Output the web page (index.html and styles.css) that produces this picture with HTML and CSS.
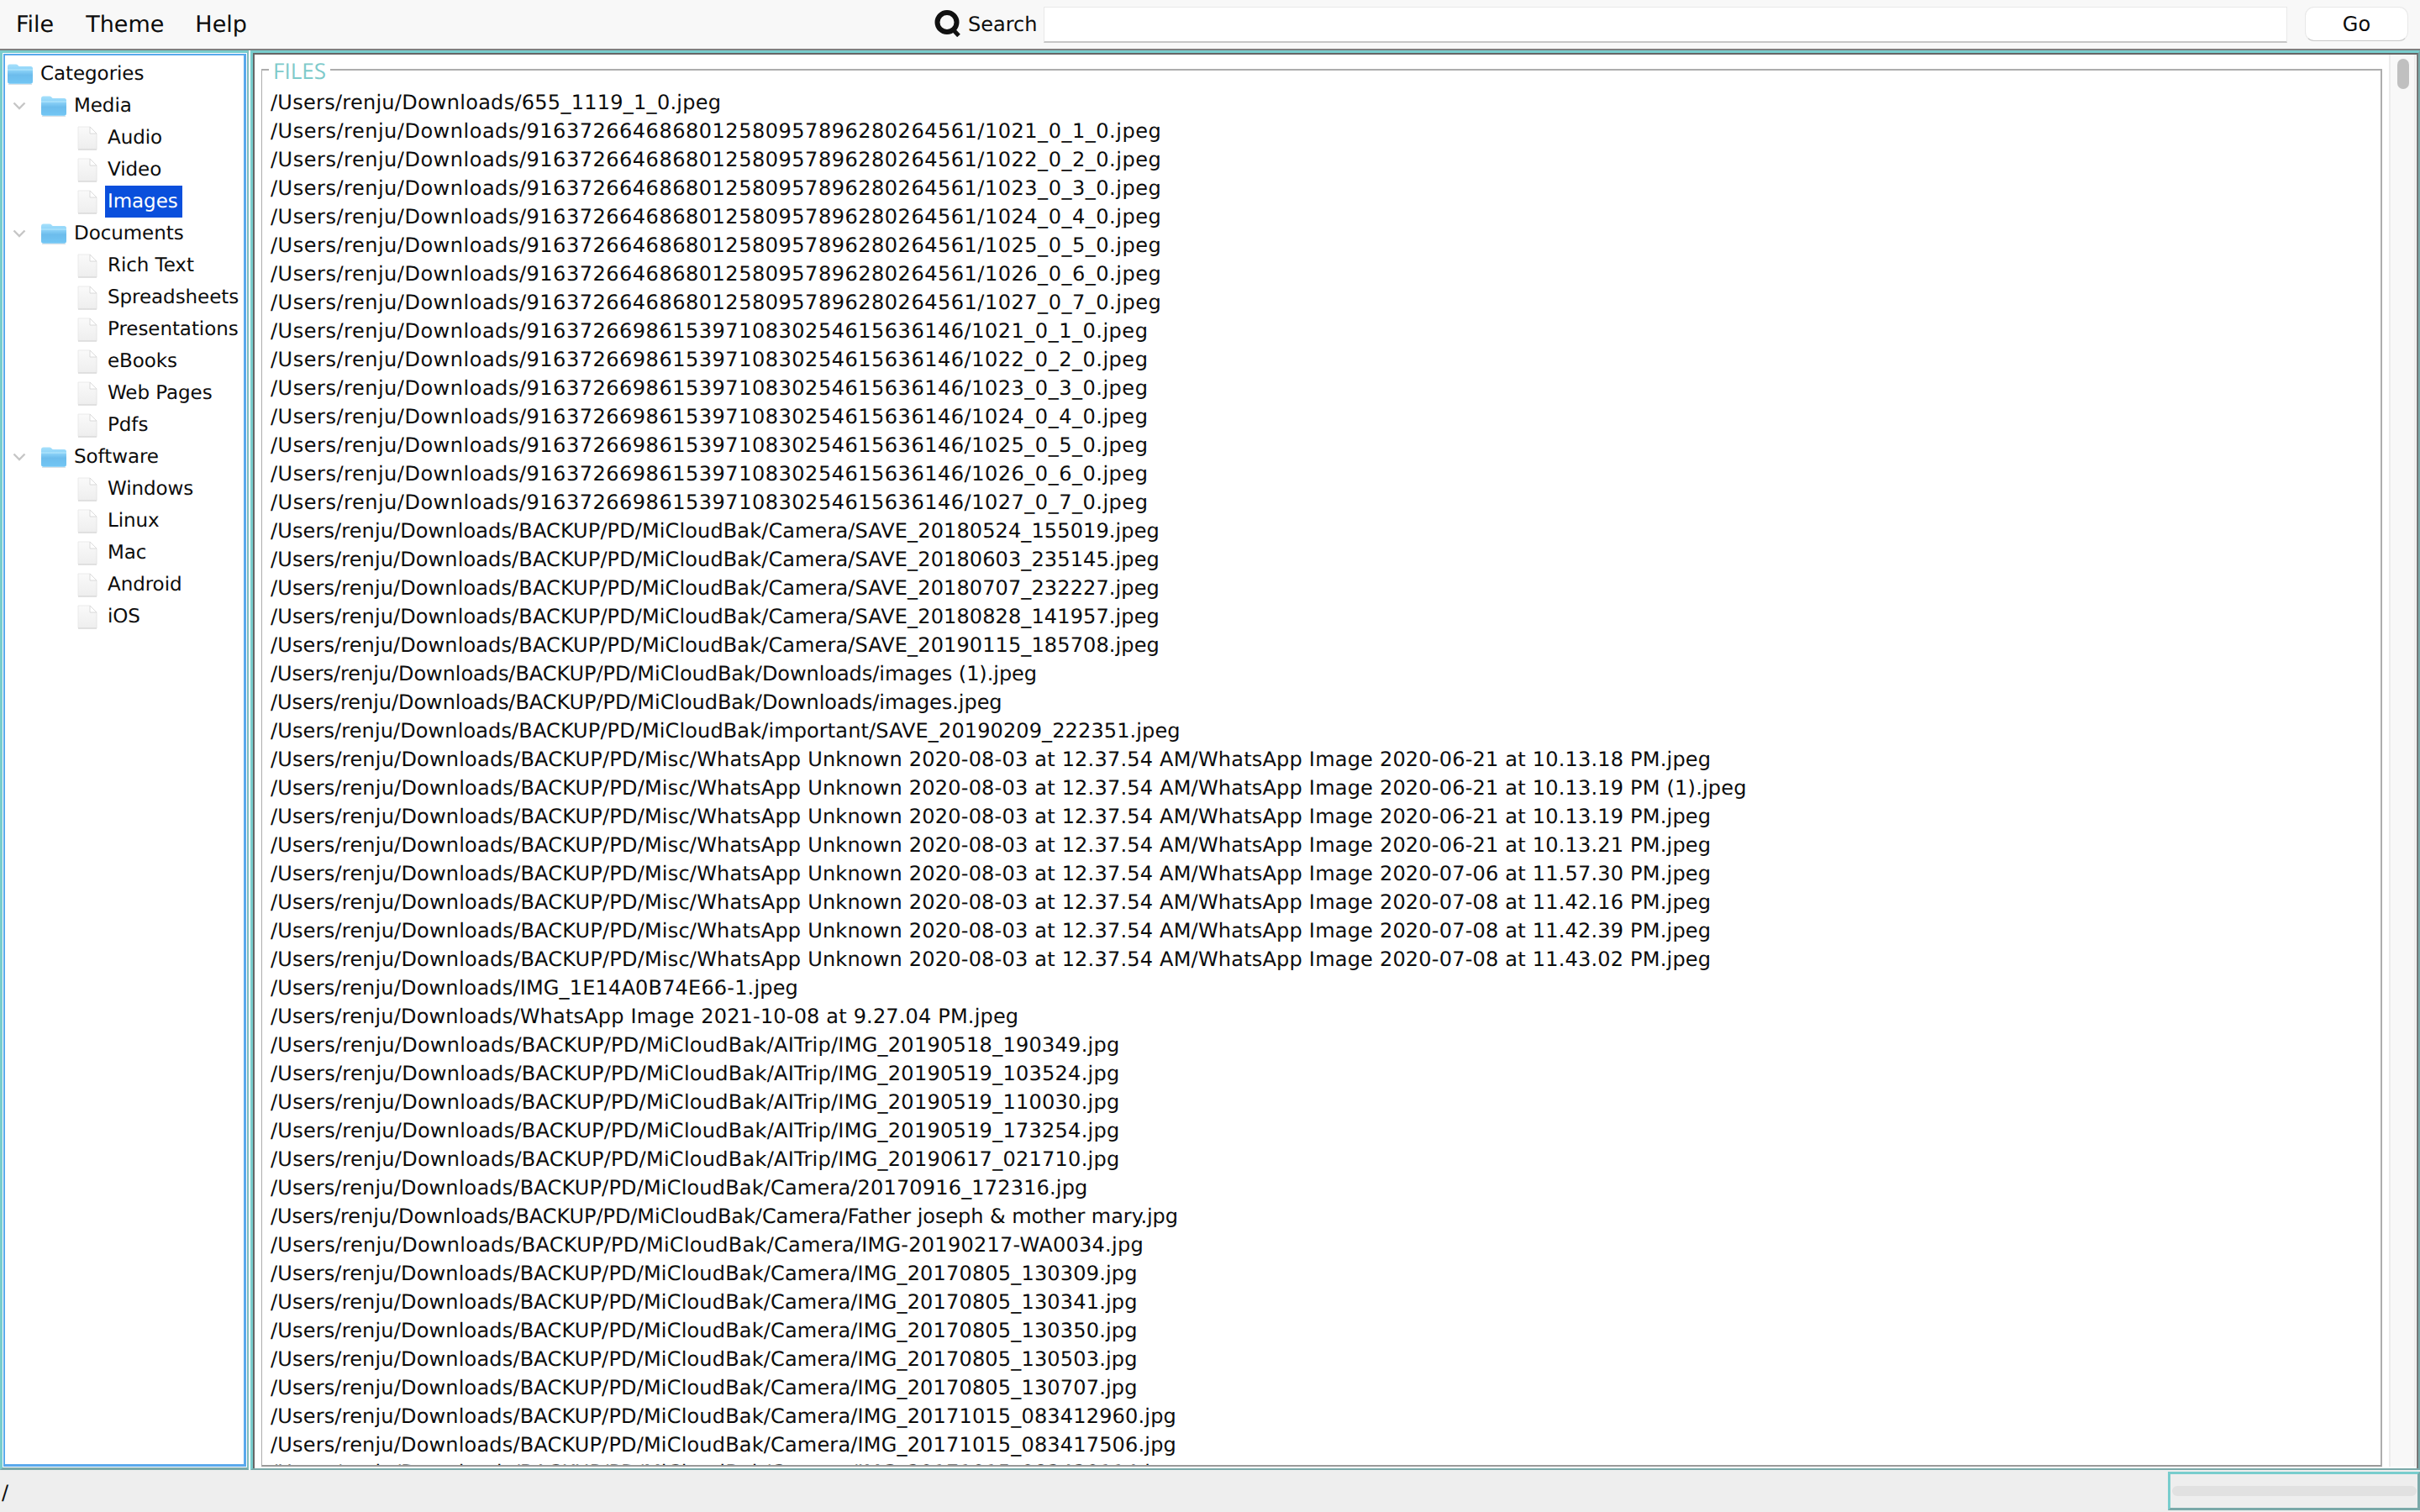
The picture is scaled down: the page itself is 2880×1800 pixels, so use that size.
FILE: index.html
```html
<!DOCTYPE html>
<html lang="en">
<head>
<meta charset="utf-8">
<title>File Categories</title>
<link rel="stylesheet" href="styles.css">
</head>
<body>
<svg class="defs" aria-hidden="true">
  <defs>
    <linearGradient id="fold" x1="0" y1="0" x2="0" y2="1">
      <stop offset="0" stop-color="#a6e0fb"/>
      <stop offset=".3" stop-color="#8dd3f8"/>
      <stop offset=".55" stop-color="#6cbcec"/>
      <stop offset="1" stop-color="#72c6f4"/>
    </linearGradient>
    <linearGradient id="page" x1="0" y1="0" x2="0" y2="1">
      <stop offset="0" stop-color="#fafafa"/>
      <stop offset="1" stop-color="#eeeeee"/>
    </linearGradient>
    <symbol id="i-folder" viewBox="0 0 32 26">
      <path d="M1 4.500C1 2.500 2 1.500 3.500 1.500h7.500c1.500 0 2 .8 2.800 1.700.5.600 1 .8 2 .8h12.700c1.500 0 2.500 1 2.500 2.500V22c0 1.800-1 2.800-2.500 2.800h-25C2 24.800 1 23.800 1 22z" fill="url(#fold)"/>
      <path d="M1 7.500h30v1H1z" fill="#b9e8fd"/>
      <path d="M2 25h28v.8H2z" fill="#d0d8de"/>
    </symbol>
    <symbol id="i-file" viewBox="0 0 24 29">
      <path d="M1 1h14l8 8v18.500H1z" fill="url(#page)"/>
      <path d="M15 1v8h8z" fill="#ffffff"/>
      <path d="M15 1l8 8h-8z" fill="none" stroke="#d2d2d2" stroke-width=".8"/>
      <path d="M1 1v26.500M1 1h14" fill="none" stroke="#e6e6e6" stroke-width=".8"/>
      <path d="M1 28h22" stroke="#cfcfcf" stroke-width="1.200"/>
      <path d="M23 9v19" stroke="#dfdfdf" stroke-width=".8"/>
    </symbol>
    <symbol id="i-chev" viewBox="0 0 16 10">
      <path d="M1.500 1.500L8 8l6.500-6.500" fill="none" stroke="#c6c6c6" stroke-width="2.400"/>
    </symbol>
  </defs>
</svg>

<header class="menubar">
  <nav class="menus">
    <span class="menu menu-file">File</span>
    <span class="menu menu-theme">Theme</span>
    <span class="menu">Help</span>
  </nav>
  <div class="search">
    <svg class="search-icon" viewBox="0 0 32 32" aria-hidden="true">
      <circle cx="15" cy="14.500" r="11.500" fill="none" stroke="#111" stroke-width="6"/>
      <path d="M21 22l8 8.500" fill="none" stroke="#111" stroke-width="5"/>
    </svg>
    <span class="search-label">Search</span>
    <div class="search-input"></div>
    <button class="go" type="button">Go</button>
  </div>
</header>

<main class="main">
  <aside class="tree-pane">
    <div class="tree">
      <div class="row root"><svg class="folder"><use href="#i-folder"/></svg><span class="label">Categories</span></div>
      <div class="row branch"><svg class="chev"><use href="#i-chev"/></svg><svg class="folder"><use href="#i-folder"/></svg><span class="label">Media</span></div>
      <div class="row leaf"><svg class="file"><use href="#i-file"/></svg><span class="label">Audio</span></div>
      <div class="row leaf"><svg class="file"><use href="#i-file"/></svg><span class="label">Video</span></div>
      <div class="row leaf"><svg class="file"><use href="#i-file"/></svg><span class="label selected">Images</span></div>
      <div class="row branch"><svg class="chev"><use href="#i-chev"/></svg><svg class="folder"><use href="#i-folder"/></svg><span class="label">Documents</span></div>
      <div class="row leaf"><svg class="file"><use href="#i-file"/></svg><span class="label">Rich Text</span></div>
      <div class="row leaf"><svg class="file"><use href="#i-file"/></svg><span class="label">Spreadsheets</span></div>
      <div class="row leaf"><svg class="file"><use href="#i-file"/></svg><span class="label">Presentations</span></div>
      <div class="row leaf"><svg class="file"><use href="#i-file"/></svg><span class="label">eBooks</span></div>
      <div class="row leaf"><svg class="file"><use href="#i-file"/></svg><span class="label">Web Pages</span></div>
      <div class="row leaf"><svg class="file"><use href="#i-file"/></svg><span class="label">Pdfs</span></div>
      <div class="row branch"><svg class="chev"><use href="#i-chev"/></svg><svg class="folder"><use href="#i-folder"/></svg><span class="label">Software</span></div>
      <div class="row leaf"><svg class="file"><use href="#i-file"/></svg><span class="label">Windows</span></div>
      <div class="row leaf"><svg class="file"><use href="#i-file"/></svg><span class="label">Linux</span></div>
      <div class="row leaf"><svg class="file"><use href="#i-file"/></svg><span class="label">Mac</span></div>
      <div class="row leaf"><svg class="file"><use href="#i-file"/></svg><span class="label">Android</span></div>
      <div class="row leaf"><svg class="file"><use href="#i-file"/></svg><span class="label">iOS</span></div>
    </div>
  </aside>

  <section class="files-pane">
    <div class="files-inner">
      <fieldset class="files">
        <legend class="files-title">FILES</legend>
        <div class="file-list">
          <div class="fit-b">/Users/renju/Downloads/655_1119_1_0.jpeg</div>
          <div class="fit-a">/Users/renju/Downloads/9163726646868012580957896280264561/1021_0_1_0.jpeg</div>
          <div class="fit-a">/Users/renju/Downloads/9163726646868012580957896280264561/1022_0_2_0.jpeg</div>
          <div class="fit-a">/Users/renju/Downloads/9163726646868012580957896280264561/1023_0_3_0.jpeg</div>
          <div class="fit-a">/Users/renju/Downloads/9163726646868012580957896280264561/1024_0_4_0.jpeg</div>
          <div class="fit-a">/Users/renju/Downloads/9163726646868012580957896280264561/1025_0_5_0.jpeg</div>
          <div class="fit-a">/Users/renju/Downloads/9163726646868012580957896280264561/1026_0_6_0.jpeg</div>
          <div class="fit-a">/Users/renju/Downloads/9163726646868012580957896280264561/1027_0_7_0.jpeg</div>
          <div class="fit-a">/Users/renju/Downloads/916372669861539710830254615636146/1021_0_1_0.jpeg</div>
          <div class="fit-a">/Users/renju/Downloads/916372669861539710830254615636146/1022_0_2_0.jpeg</div>
          <div class="fit-a">/Users/renju/Downloads/916372669861539710830254615636146/1023_0_3_0.jpeg</div>
          <div class="fit-a">/Users/renju/Downloads/916372669861539710830254615636146/1024_0_4_0.jpeg</div>
          <div class="fit-a">/Users/renju/Downloads/916372669861539710830254615636146/1025_0_5_0.jpeg</div>
          <div class="fit-a">/Users/renju/Downloads/916372669861539710830254615636146/1026_0_6_0.jpeg</div>
          <div class="fit-a">/Users/renju/Downloads/916372669861539710830254615636146/1027_0_7_0.jpeg</div>
          <div class="fit-d">/Users/renju/Downloads/BACKUP/PD/MiCloudBak/Camera/SAVE_20180524_155019.jpeg</div>
          <div class="fit-d">/Users/renju/Downloads/BACKUP/PD/MiCloudBak/Camera/SAVE_20180603_235145.jpeg</div>
          <div class="fit-d">/Users/renju/Downloads/BACKUP/PD/MiCloudBak/Camera/SAVE_20180707_232227.jpeg</div>
          <div class="fit-d">/Users/renju/Downloads/BACKUP/PD/MiCloudBak/Camera/SAVE_20180828_141957.jpeg</div>
          <div class="fit-d">/Users/renju/Downloads/BACKUP/PD/MiCloudBak/Camera/SAVE_20190115_185708.jpeg</div>
          <div class="fit-e">/Users/renju/Downloads/BACKUP/PD/MiCloudBak/Downloads/images (1).jpeg</div>
          <div class="fit-e">/Users/renju/Downloads/BACKUP/PD/MiCloudBak/Downloads/images.jpeg</div>
          <div class="fit-d">/Users/renju/Downloads/BACKUP/PD/MiCloudBak/important/SAVE_20190209_222351.jpeg</div>
          <div class="fit-w">/Users/renju/Downloads/BACKUP/PD/Misc/WhatsApp Unknown 2020-08-03 at 12.37.54 AM/WhatsApp Image 2020-06-21 at 10.13.18 PM.jpeg</div>
          <div class="fit-w">/Users/renju/Downloads/BACKUP/PD/Misc/WhatsApp Unknown 2020-08-03 at 12.37.54 AM/WhatsApp Image 2020-06-21 at 10.13.19 PM (1).jpeg</div>
          <div class="fit-w">/Users/renju/Downloads/BACKUP/PD/Misc/WhatsApp Unknown 2020-08-03 at 12.37.54 AM/WhatsApp Image 2020-06-21 at 10.13.19 PM.jpeg</div>
          <div class="fit-w">/Users/renju/Downloads/BACKUP/PD/Misc/WhatsApp Unknown 2020-08-03 at 12.37.54 AM/WhatsApp Image 2020-06-21 at 10.13.21 PM.jpeg</div>
          <div class="fit-w">/Users/renju/Downloads/BACKUP/PD/Misc/WhatsApp Unknown 2020-08-03 at 12.37.54 AM/WhatsApp Image 2020-07-06 at 11.57.30 PM.jpeg</div>
          <div class="fit-w">/Users/renju/Downloads/BACKUP/PD/Misc/WhatsApp Unknown 2020-08-03 at 12.37.54 AM/WhatsApp Image 2020-07-08 at 11.42.16 PM.jpeg</div>
          <div class="fit-w">/Users/renju/Downloads/BACKUP/PD/Misc/WhatsApp Unknown 2020-08-03 at 12.37.54 AM/WhatsApp Image 2020-07-08 at 11.42.39 PM.jpeg</div>
          <div class="fit-w">/Users/renju/Downloads/BACKUP/PD/Misc/WhatsApp Unknown 2020-08-03 at 12.37.54 AM/WhatsApp Image 2020-07-08 at 11.43.02 PM.jpeg</div>
          <div class="fit-c">/Users/renju/Downloads/IMG_1E14A0B74E66-1.jpeg</div>
          <div class="fit-c">/Users/renju/Downloads/WhatsApp Image 2021-10-08 at 9.27.04 PM.jpeg</div>
          <div class="fit-b">/Users/renju/Downloads/BACKUP/PD/MiCloudBak/AITrip/IMG_20190518_190349.jpg</div>
          <div class="fit-b">/Users/renju/Downloads/BACKUP/PD/MiCloudBak/AITrip/IMG_20190519_103524.jpg</div>
          <div class="fit-b">/Users/renju/Downloads/BACKUP/PD/MiCloudBak/AITrip/IMG_20190519_110030.jpg</div>
          <div class="fit-b">/Users/renju/Downloads/BACKUP/PD/MiCloudBak/AITrip/IMG_20190519_173254.jpg</div>
          <div class="fit-b">/Users/renju/Downloads/BACKUP/PD/MiCloudBak/AITrip/IMG_20190617_021710.jpg</div>
          <div class="fit-c">/Users/renju/Downloads/BACKUP/PD/MiCloudBak/Camera/20170916_172316.jpg</div>
          <div class="fit-e">/Users/renju/Downloads/BACKUP/PD/MiCloudBak/Camera/Father joseph &amp; mother mary.jpg</div>
          <div class="fit-b">/Users/renju/Downloads/BACKUP/PD/MiCloudBak/Camera/IMG-20190217-WA0034.jpg</div>
          <div class="fit-c">/Users/renju/Downloads/BACKUP/PD/MiCloudBak/Camera/IMG_20170805_130309.jpg</div>
          <div class="fit-c">/Users/renju/Downloads/BACKUP/PD/MiCloudBak/Camera/IMG_20170805_130341.jpg</div>
          <div class="fit-c">/Users/renju/Downloads/BACKUP/PD/MiCloudBak/Camera/IMG_20170805_130350.jpg</div>
          <div class="fit-c">/Users/renju/Downloads/BACKUP/PD/MiCloudBak/Camera/IMG_20170805_130503.jpg</div>
          <div class="fit-c">/Users/renju/Downloads/BACKUP/PD/MiCloudBak/Camera/IMG_20170805_130707.jpg</div>
          <div class="fit-c">/Users/renju/Downloads/BACKUP/PD/MiCloudBak/Camera/IMG_20171015_083412960.jpg</div>
          <div class="fit-c">/Users/renju/Downloads/BACKUP/PD/MiCloudBak/Camera/IMG_20171015_083417506.jpg</div>
          <div class="fit-c clipped">/Users/renju/Downloads/BACKUP/PD/MiCloudBak/Camera/IMG_20171015_083420114.jpg</div>
        </div>
      </fieldset>
      <div class="scrollbar"><div class="thumb"></div></div>
    </div>
  </section>
</main>

<footer class="status">
  <span class="path">/</span>
  <div class="progress"><div class="progress-bar"></div></div>
</footer>
</body>
</html>
```
FILE: styles.css
```css
* { box-sizing: border-box; }
html, body { margin: 0; height: 100%; }
body {
  width: 2880px;
  height: 1800px;
  overflow: hidden;
  display: flex;
  flex-direction: column;
  background: #fff;
  color: #0c0c0c;
  font-family: "DejaVu Sans", "Liberation Sans", sans-serif;
  font-size: 24px;
  text-rendering: geometricPrecision;
}
.defs { width: 0; height: 0; display: block; }

.menubar {
  flex: 0 0 60px;
  display: flex;
  align-items: flex-start;
  background: #f8f8f8;
  border-bottom: 2px solid #7f7f7f;
}
.menus {
  flex: 0 0 1112px;
  display: flex;
  padding: 13px 0 0 19px;
  font-size: 27px;
  line-height: 34px;
}
.menu-file { margin-right: 38px; }
.menu-theme { margin-right: 37px; }
.search { display: flex; align-items: flex-start; }
.search-icon { width: 32px; height: 32px; margin-top: 12px; }
.search-label { margin: 12px 0 0 8px; font-size: 24px; line-height: 34px; width: 82px; }
.search-input {
  width: 1480px;
  height: 43px;
  margin: 8px 0 0 8px;
  background: #fff;
  border: 1px solid #e9e9e9;
  border-bottom: 2px solid #c6c6c6;
}
.go {
  width: 123px;
  height: 41px;
  margin: 8px 0 0 21px;
  padding: 0;
  background: #fff;
  border: 1px solid #e8e8e8;
  border-bottom-color: #c9c9c9;
  border-radius: 11px;
  font: inherit;
  font-size: 24px;
  color: #0c0c0c;
}

.main { flex: 0 0 1690px; display: flex; gap: 2px; background: #fff; min-height: 0; }

.tree-pane {
  flex: 0 0 296px;
  padding: 1px;
  border: 3px solid #78cdcd;
  border-right: 2px solid #7fbcbc;
  border-bottom: 3px solid #7aa9a9;
}
.tree {
  height: 100%;
  padding-top: 3px;
  border: 2px solid #5aa9ec;
  border-width: 2px 3px 3px 2px;
  overflow: hidden;
  background: #fff;
  font-size: 23px;
  letter-spacing: -.06px;
}
.row { display: flex; align-items: center; height: 38px; }
.label { line-height: 38px; white-space: nowrap; }
.folder { width: 32px; height: 26px; flex: none; margin-right: 8px; }
.file { width: 24px; height: 29px; flex: none; margin-right: 12px; }
.chev { width: 16px; height: 10px; flex: none; margin: 0 17px 0 9px; }
.branch .folder { margin-right: 8px; }
.root { padding-left: 2px; }
.leaf { padding-left: 86px; }
.selected {
  margin-left: -3px;
  padding: 0 5px 0 3px;
  background: #0a4fdc;
  color: #fff;
}

.files-pane {
  flex: 1 1 0;
  min-width: 0;
  border: 3px solid #78cdcd;
  border-right: 2px solid #7aa9a9;
  border-bottom: 2px solid #7aa9a9;
}
.files-inner {
  height: 100%;
  display: flex;
  background: #fff;
  border-top: 2px solid #666;
  border-left: 2px solid #666;
  border-right: 2px solid #777;
  padding: 0 0 2px 8px;
}
.files {
  flex: 0 0 2524px;
  min-width: 0;
  margin: 2px 0 0;
  padding: 0 0 0 10px;
  border: 2px solid #adadad;
  border-bottom-color: #999;
  border-left-width: 1px;
  overflow: hidden;
}
.files-title {
  margin-left: -2px;
  padding: 3px 5px 0;
  font-family: "Open Sans", "DejaVu Sans", sans-serif;
  font-size: 26px;
  line-height: 28px;
  color: #7ecaca;
}
.file-list { padding-top: 7px; line-height: 34px; white-space: nowrap; }
/* DejaVu's digits run narrower than the reference's face; each class trues up a family of rows */
.fit-a { letter-spacing: .52px; }
.fit-b { letter-spacing: .27px; }
.fit-c { letter-spacing: .18px; }
.fit-w { letter-spacing: .21px; }
.fit-d { letter-spacing: .12px; }
.fit-e { letter-spacing: -.05px; }
.clipped { margin-top: -1px; }

.scrollbar {
  flex: 0 0 30px;
  margin-left: 8px;
  padding: 5px 6px 0 8px;
  background: #f8f8f8;
  border-left: 2px solid #ececec;
  border-right: 2px solid #ececec;
}
.thumb { width: 14px; height: 36px; background: #c0c0c0; border-radius: 8px; }

.status {
  flex: 0 0 50px;
  display: flex;
  justify-content: space-between;
  background: #eeeeee;
}
.path { padding: 10px 0 0 2px; line-height: 34px; }
.progress {
  width: 300px;
  height: 46px;
  margin-top: 2px;
  padding: 14px 1px 0 2px;
  border: 3px solid #78cdcd;
  border-right-color: #7aa9a9;
  border-bottom-color: #7aa9a9;
}
.progress-bar { height: 12px; background: #e1e1e1; border-radius: 6px; }
```
